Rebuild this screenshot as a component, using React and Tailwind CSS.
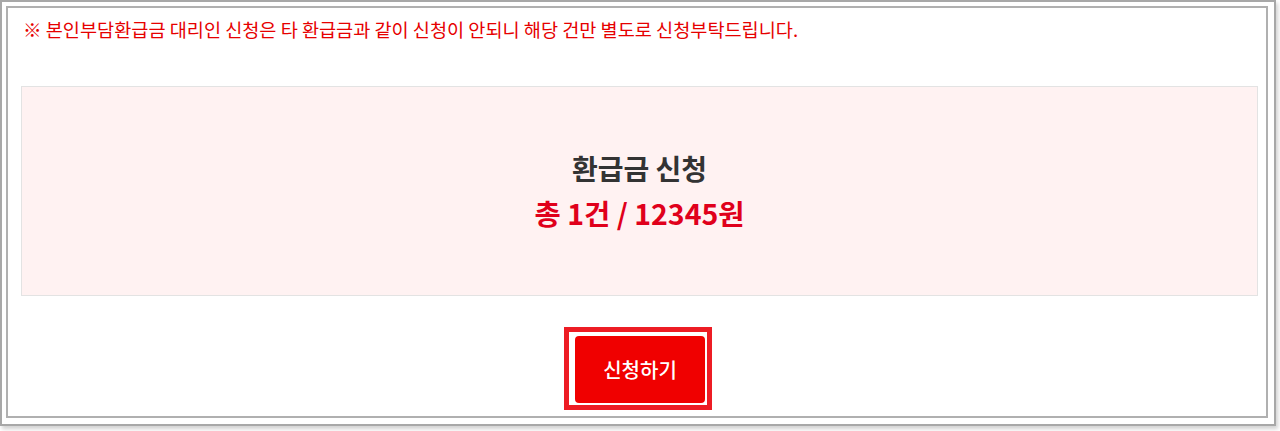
export default function App() {
  const font = { fontFamily: '"Noto Sans CJK KR", "Noto Sans", sans-serif' };
  return (
    <div className="w-[1280px] h-[431px] bg-white" style={font}>
      <div className="w-[1276px] h-[426px] border-2 border-[#a8a8a8] bg-white pt-[4px] pl-[4px] shadow-[2px_3px_4px_rgba(0,0,0,0.18)]">
        <div className="w-[1262px] h-[412px] border-2 border-[#b0b0b0] bg-white flex flex-col">
          <p className="pl-[15px] pt-[8px] text-[18.6px] leading-[26px] text-[#e60000]">
            ※ 본인부담환급금 대리인 신청은 타 환급금과 같이 신청이 안되니 해당 건만 별도로 신청부탁드립니다.
          </p>
          <div className="mt-[44px] ml-[13px] w-[1237px] h-[210px] border border-[#e3e3e3] bg-[#fff2f2] flex flex-col items-center justify-center">
            <div className="text-[28px] leading-[34px] font-bold text-[#333333]">환급금 신청</div>
            <div className="mt-[10px] text-[28.5px] leading-[36px] font-bold text-[#e0001b]">총 1건 / 12345원</div>
          </div>
          <div className="mt-[31px] flex justify-center">
            <div className="border-[5px] border-[#ed1c24] pl-[6px] pr-[2px] pt-[4px] pb-[2px] ml-[2px]">
              <button className="w-[130px] h-[67px] rounded-[4px] bg-[#f00000] text-white text-[20px] font-medium flex items-center justify-center">
                신청하기
              </button>
            </div>
          </div>
        </div>
      </div>
    </div>
  );
}
